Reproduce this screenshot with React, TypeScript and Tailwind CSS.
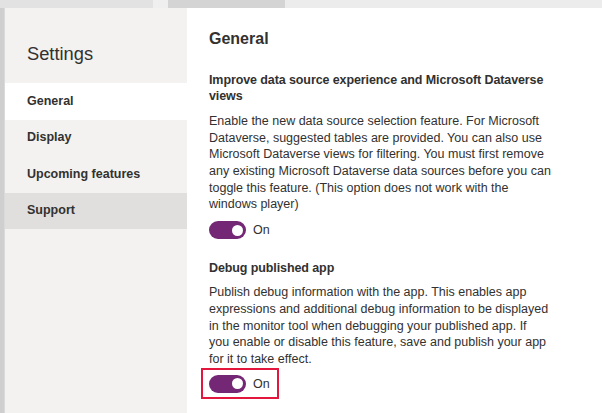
import React from "react";

function Toggle({ boxed }: { boxed?: boolean }) {
  return (
    <div className="relative flex items-center h-[18px]">
      <div className="relative w-[37px] h-[18px] rounded-full bg-[#742774]">
        <span className="absolute right-[3.5px] top-[3.5px] w-[11px] h-[11px] rounded-full bg-white" />
      </div>
      <span className="ml-[7px] text-[12.5px] leading-[18px] text-[#323130]">On</span>
      {boxed && (
        <span className="absolute left-[-8.5px] top-[-7px] w-[78px] h-[31px] border-2 border-[#e3173e]" />
      )}
    </div>
  );
}

export default function App() {
  const nav = [
    { label: "General", cls: "bg-white" },
    { label: "Display", cls: "" },
    { label: "Upcoming features", cls: "" },
    { label: "Support", cls: "bg-[#e1dfdd]" },
  ];
  return (
    <div className="w-[602px] h-[413px] bg-white flex flex-col overflow-hidden font-['Liberation_Sans',Arial,sans-serif] text-[#323130]">
      <div className="h-[8px] flex shrink-0">
        <div className="w-[153px] bg-[#e2e2e2]" />
        <div className="w-[15px] bg-[#efefef]" />
        <div className="w-[117px] bg-[#d4d4d4]" />
        <div className="flex-1 bg-[#ececec]" />
      </div>
      <div className="flex flex-1 min-h-0">
        <div className="w-[4px] bg-[#cfcfcf]" />
        <div className="w-px bg-[#dadada]" />
        <aside className="w-[182px] bg-[#f3f2f1] flex flex-col">
          <div className="h-[75px] pt-[34px] pl-[22px] text-[18.3px] leading-[24px]">Settings</div>
          {nav.map((n) => (
            <div
              key={n.label}
              className={`h-[36.5px] flex items-center pl-[22px] text-[12.5px] font-semibold ${n.cls}`}
            >
              {n.label}
            </div>
          ))}
        </aside>
        <main className="flex-1 pl-[22px] pr-[20px] pt-[20.5px] flex flex-col">
          <h1 className="text-[16px] leading-[20px] font-semibold">General</h1>
          <h2 className="mt-[23px] text-[12.5px] leading-[16.7px] font-semibold tracking-[-0.1px]">
            Improve data source experience and Microsoft Dataverse
            <br />
            views
          </h2>
          <p className="mt-[8px] text-[12.5px] leading-[16.7px] whitespace-nowrap">
            Enable the new data source selection feature. For Microsoft
            <br />
            Dataverse, suggested tables are provided. You can also use
            <br />
            Microsoft Dataverse views for filtering. You must first remove
            <br />
            any existing Microsoft Dataverse data sources before you can
            <br />
            toggle this feature. (This option does not work with the
            <br />
            windows player)
          </p>
          <div className="mt-[8px]">
            <Toggle />
          </div>
          <h2 className="mt-[21px] text-[12.5px] leading-[16.7px] font-semibold tracking-[-0.1px]">
            Debug published app
          </h2>
          <p className="mt-[7.5px] text-[12.5px] leading-[16.7px] whitespace-nowrap">
            Publish debug information with the app. This enables app
            <br />
            expressions and additional debug information to be displayed
            <br />
            in the monitor tool when debugging your published app. If
            <br />
            you enable or disable this feature, save and publish your app
            <br />
            for it to take effect.
          </p>
          <div className="mt-[7px]">
            <Toggle boxed />
          </div>
        </main>
      </div>
    </div>
  );
}
